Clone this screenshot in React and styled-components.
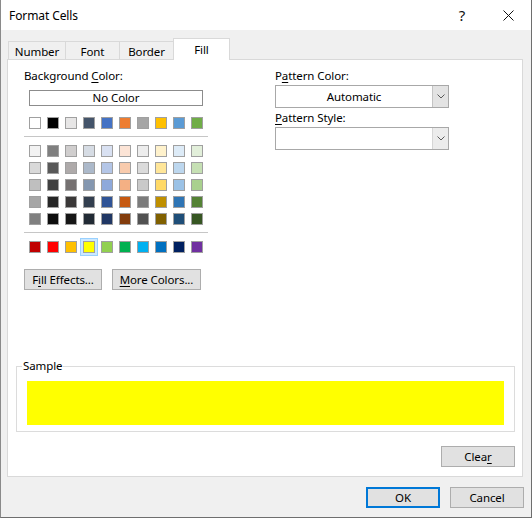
import React from "react";
import styled, { createGlobalStyle } from "styled-components";

const GlobalStyle = createGlobalStyle`
  * { box-sizing: border-box; }
  html, body { margin: 0; padding: 0; background: #f0f0f0; }
  body {
    font-family: "Segoe UI", "Noto Sans", sans-serif;
    font-size: 11.5px;
    letter-spacing: -0.1px;
    color: #000;
  }
`;

const THEME_ROW = ["#FFFFFF", "#000000", "#E7E6E6", "#44546A", "#4472C4", "#ED7D31", "#A5A5A5", "#FFC000", "#5B9BD5", "#70AD47"];
const TINTS = [
  ["#F2F2F2", "#7F7F7F", "#D0CECE", "#D6DCE4", "#D9E1F2", "#FCE4D6", "#EDEDED", "#FFF2CC", "#DDEBF7", "#E2EFDA"],
  ["#D9D9D9", "#595959", "#AEAAAA", "#ACB9CA", "#B4C6E7", "#F8CBAD", "#DBDBDB", "#FFE699", "#BDD7EE", "#C6E0B4"],
  ["#BFBFBF", "#404040", "#757171", "#8497B0", "#8EA9DB", "#F4B084", "#C9C9C9", "#FFD966", "#9BC2E6", "#A9D08E"],
  ["#A6A6A6", "#262626", "#3A3838", "#333F4F", "#305496", "#C65911", "#7B7B7B", "#BF8F00", "#2F75B5", "#548235"],
  ["#808080", "#0D0D0D", "#161616", "#222B35", "#203764", "#833C0C", "#525252", "#806000", "#1F4E78", "#375623"],
];
const STANDARD = ["#C00000", "#FF0000", "#FFC000", "#FFFF00", "#92D050", "#00B050", "#00B0F0", "#0070C0", "#002060", "#7030A0"];
const TABS = [
  { label: "Number", width: 58 },
  { label: "Font", width: 55 },
  { label: "Border", width: 55 },
  { label: "Fill", width: 57, active: true },
];

const Window = styled.div`
  width: 532px;
  height: 518px;
  display: flex;
  flex-direction: column;
  background: #f0f0f0;
  border-left: 1px solid #8a8a8a;
  border-right: 1px solid #6e6e6e;
  border-bottom: 1px solid #6e6e6e;
`;

const TitleBar = styled.div`
  height: 30px;
  background: #fff;
  display: flex;
  align-items: center;
  padding-left: 8px;
`;

const Title = styled.div`
  flex: 1;
  font-size: 12px;
  margin-top: 1px;
`;

const TitleButton = styled.div`
  width: 46px;
  height: 30px;
  display: flex;
  align-items: center;
  justify-content: center;
  font-size: 15px;
  color: #111;
`;

const Body = styled.div`
  flex: 1;
  display: flex;
  flex-direction: column;
  padding: 8px 8px 0 6px;
`;

const TabStrip = styled.div`
  display: flex;
  align-items: flex-end;
  height: 22px;
  margin: 0 0 -1px 1px;
  position: relative;
  z-index: 1;
`;

const Tab = styled.div`
  width: ${(p) => p.$width}px;
  height: ${(p) => (p.$active ? 22 : 18)}px;
  margin-bottom: ${(p) => (p.$active ? 0 : 1)}px;
  margin-left: -1px;
  &:first-child { margin-left: 0; }
  border: 1px solid #d9d9d9;
  border-bottom: none;
  background: ${(p) => (p.$active ? "#fff" : "#f0f0f0")};
  display: flex;
  align-items: center;
  justify-content: center;
  padding-top: ${(p) => (p.$active ? 0 : 1)}px;
`;

const Panel = styled.div`
  height: 418px;
  background: #fff;
  border: 1px solid #d9d9d9;
  display: flex;
  flex-direction: column;
  padding: 8px 7px 9px 8px;
`;

const TopRow = styled.div`
  display: grid;
  grid-template-columns: 184px 174px;
  column-gap: 67px;
  padding-left: 8px;
`;

const Column = styled.div`
  display: flex;
  flex-direction: column;
  align-items: flex-start;
`;

const Label = styled.div`
  line-height: 16px;
  margin-top: ${(p) => p.$mt || 0}px;
  white-space: nowrap;
`;

const Key = styled.span`
  text-decoration: underline;
  text-underline-offset: 2px;
`;

const NoColorBox = styled.div`
  width: 174px;
  height: 16px;
  margin: 6px 0 0 5px;
  border: 1px solid #8c8c8c;
  display: flex;
  align-items: center;
  justify-content: center;
  line-height: 14px;
`;

const SwatchRow = styled.div`
  display: flex;
  gap: 6px;
  margin: ${(p) => p.$mt}px 0 0 5px;
`;

const SwatchGrid = styled.div`
  display: grid;
  grid-template-columns: repeat(10, 12px);
  column-gap: 6px;
  row-gap: 5px;
  margin: 8px 0 0 5px;
`;

const Swatch = styled.div`
  width: 12px;
  height: 12px;
  background: ${(p) => p.$color};
  border: 1px solid #a0a0a0;
  box-shadow: ${(p) => (p.$selected ? "0 0 0 2px #cce8ff, 0 0 0 3px #99d1ff" : "none")};
`;

const Separator = styled.div`
  width: 184px;
  height: 1px;
  background: #c6c6c6;
  margin-top: 7px;
`;

const ButtonRow = styled.div`
  display: flex;
  gap: 10px;
  margin-top: ${(p) => p.$mt || 0}px;
  justify-content: ${(p) => p.$justify || "flex-start"};
`;

const Button = styled.div`
  width: ${(p) => p.$width}px;
  height: 21px;
  background: #e1e1e1;
  border: ${(p) => (p.$default ? "2px solid #0078d7" : "1px solid #adadad")};
  display: flex;
  align-items: center;
  justify-content: center;
  white-space: nowrap;
`;

const Select = styled.div`
  width: 174px;
  height: 23px;
  margin-top: 1px;
  border: 1px solid #a8a8a8;
  display: flex;
`;

const SelectValue = styled.div`
  flex: 1;
  display: flex;
  align-items: center;
  justify-content: center;
`;

const SelectArrow = styled.div`
  width: 16px;
  background: ${(p) => (p.$light ? "#ececec" : "#e3e3e3")};
  border-left: 1px solid ${(p) => (p.$light ? "#d6d6d6" : "#c4c4c4")};
  display: flex;
  align-items: center;
  justify-content: center;
`;

const Spacer = styled.div`
  flex: 1;
`;

const SampleBox = styled.fieldset`
  margin: 0;
  border: 1px solid #dcdcdc;
  padding: 7px 10px 6px 10px;
  min-width: 0;
`;

const SampleLegend = styled.legend`
  padding: 0 1px;
  margin-left: -5px;
  line-height: 16px;
`;

const SampleFill = styled.div`
  height: 44px;
  background: #ffff00;
`;

const Footer = styled.div`
  display: flex;
  justify-content: flex-end;
  gap: 10px;
  padding: 10px 0 9px;
  margin-right: -1px;
`;

const Chevron = () => (
  <svg width="8" height="5" viewBox="0 0 8 5">
    <path d="M0.5 0.5 L4 4 L7.5 0.5" fill="none" stroke="#5a5a5a" strokeWidth="1" />
  </svg>
);

const CloseIcon = () => (
  <svg width="11" height="11" viewBox="0 0 11 11">
    <path d="M0.5 0.5 L10.5 10.5 M10.5 0.5 L0.5 10.5" stroke="#111" strokeWidth="1" />
  </svg>
);

export default function App() {
  return (
    <>
      <GlobalStyle />
      <Window>
        <TitleBar>
          <Title>Format Cells</Title>
          <TitleButton>?</TitleButton>
          <TitleButton>
            <CloseIcon />
          </TitleButton>
        </TitleBar>
        <Body>
          <TabStrip>
            {TABS.map((t) => (
              <Tab key={t.label} $width={t.width} $active={t.active}>
                {t.label}
              </Tab>
            ))}
          </TabStrip>
          <Panel>
            <TopRow>
              <Column>
                <Label>
                  Background <Key>C</Key>olor:
                </Label>
                <NoColorBox>No Color</NoColorBox>
                <SwatchRow $mt={11}>
                  {THEME_ROW.map((c) => (
                    <Swatch key={c} $color={c} />
                  ))}
                </SwatchRow>
                <Separator />
                <SwatchGrid>
                  {TINTS.flat().map((c, i) => (
                    <Swatch key={i} $color={c} />
                  ))}
                </SwatchGrid>
                <Separator />
                <SwatchRow $mt={8}>
                  {STANDARD.map((c) => (
                    <Swatch key={c} $color={c} $selected={c === "#FFFF00"} />
                  ))}
                </SwatchRow>
                <ButtonRow $mt={16}>
                  <Button $width={78}>
                    F<Key>i</Key>ll Effects...
                  </Button>
                  <Button $width={89}>
                    <Key>M</Key>ore Colors...
                  </Button>
                </ButtonRow>
              </Column>
              <Column>
                <Label>
                  P<Key>a</Key>ttern Color:
                </Label>
                <Select>
                  <SelectValue>Automatic</SelectValue>
                  <SelectArrow>
                    <Chevron />
                  </SelectArrow>
                </Select>
                <Label $mt={2}>
                  <Key>P</Key>attern Style:
                </Label>
                <Select>
                  <SelectValue />
                  <SelectArrow $light>
                    <Chevron />
                  </SelectArrow>
                </Select>
              </Column>
            </TopRow>
            <Spacer />
            <SampleBox>
              <SampleLegend>Sample</SampleLegend>
              <SampleFill />
            </SampleBox>
            <ButtonRow $mt={14} $justify="flex-end">
              <Button $width={74}>
                Clea<Key>r</Key>
              </Button>
            </ButtonRow>
          </Panel>
          <Footer>
            <Button $width={74} $default>
              OK
            </Button>
            <Button $width={74}>Cancel</Button>
          </Footer>
        </Body>
      </Window>
    </>
  );
}
